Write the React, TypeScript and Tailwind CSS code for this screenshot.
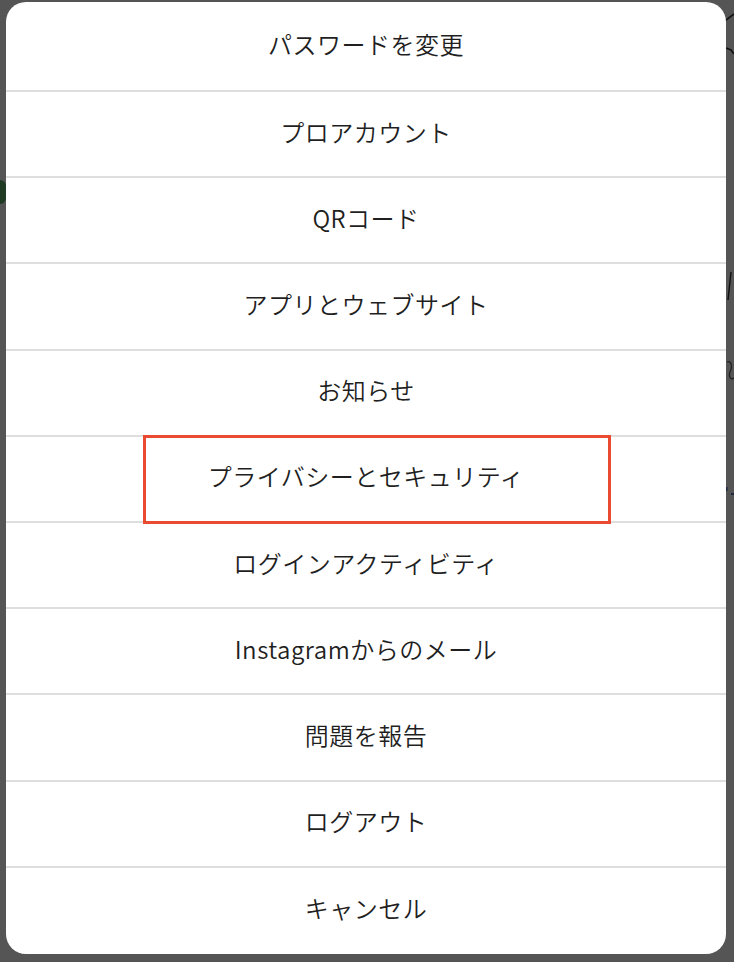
import React from "react";

const items = [
  "パスワードを変更",
  "プロアカウント",
  "QRコード",
  "アプリとウェブサイト",
  "お知らせ",
  "プライバシーとセキュリティ",
  "ログインアクティビティ",
  "Instagramからのメール",
  "問題を報告",
  "ログアウト",
  "キャンセル",
];

export default function App() {
  return (
    <div
      className="relative w-[734px] h-[962px] bg-[#555555] pl-[6px] pt-[2px] overflow-hidden"
      style={{ fontFamily: '"Noto Sans CJK JP", "Noto Sans", sans-serif' }}
    >
      {/* background fragments peeking out on the right and left */}
      <svg className="absolute left-[726px] top-0" width="8" height="520" viewBox="0 0 8 520">
        <path d="M0 20 L8 14" stroke="#111" strokeWidth="1.6" fill="none" />
        <path d="M0 48 L5 50 L8 54" stroke="#111" strokeWidth="1.6" fill="none" />
        <path d="M2 300 L5 272" stroke="#111" strokeWidth="1.4" fill="none" />
        <path d="M1 362 C5 360 7 366 4 372 C2 378 6 380 8 378" stroke="#222" strokeWidth="1.3" fill="none" />
        <rect x="0" y="487" width="1.5" height="4" fill="#1e2a44" />
        <rect x="5" y="493" width="3" height="2" fill="#1e2a44" />
      </svg>
      <div className="absolute left-0 top-[180px] w-[6px] h-[24px] rounded-r-full bg-[#1f3b24]" />

      <div className="relative w-[720px] h-[952px] rounded-[20px] bg-white overflow-hidden flex flex-col">
        {items.map((t, i) => (
          <div
            key={t}
            className={
              "relative shrink-0 flex items-center justify-center pb-[5px] text-[24px] font-[350] text-[#1f1f1f] tracking-[0.5px] " +
              (i === 0
                ? "h-[88px]"
                : i === 10
                ? "h-[88px] border-t-2 border-[#dedede]"
                : "h-[86.2px] border-t-2 border-[#dedede]")
            }
          >
            <span className="leading-none">{t}</span>
            {i === 5 && (
              <div className="absolute z-10 left-[137px] top-[-2px] w-[468px] h-[89px] border-[3px] border-[#ea4a30]" />
            )}
          </div>
        ))}
      </div>
    </div>
  );
}
